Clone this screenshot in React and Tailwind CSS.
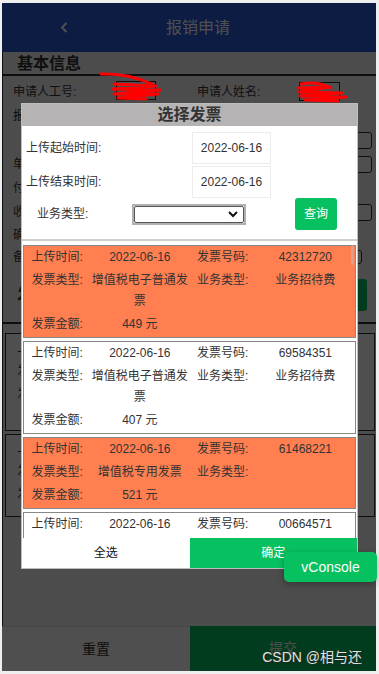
import React from "react";

const FONT = "font-['Liberation_Sans','Noto_Sans_CJK_SC',sans-serif]";

const invoices = [
  { id: 1, date: "2022-06-16", no: "42312720", type: "增值税电子普通发票", biz: "业务招待费", amount: 449, selected: true },
  { id: 2, date: "2022-06-16", no: "69584351", type: "增值税电子普通发票", biz: "业务招待费", amount: 407, selected: false },
  { id: 3, date: "2022-06-16", no: "61468221", type: "增值税专用发票", biz: "", amount: 521, selected: true },
  { id: 4, date: "2022-06-16", no: "00664571", type: "增值税电子普通发票", biz: "业务招待费", amount: 362, selected: false },
];

const InvoiceGrid = ({ inv }) => (
  <div className="grid grid-cols-[2fr_3fr_2fr_3fr] text-center text-[12px] leading-[21px] text-[#333]">
    <div className="py-px">上传时间:</div>
    <div className="py-px">{inv.date}</div>
    <div className="py-px">发票号码:</div>
    <div className="py-px">{inv.no}</div>
    <div className="py-px">发票类型:</div>
    <div className="py-px">{inv.type}</div>
    <div className="py-px">业务类型:</div>
    <div className="py-px">{inv.biz}</div>
    <div className="py-px">发票金额:</div>
    <div className="py-px">{inv.amount} 元</div>
  </div>
);

const InvoiceCard = ({ inv }) => (
  <div className={`shrink-0 border border-[#888] pb-px ${inv.selected ? "bg-[#ff7f50]" : "bg-white"}`}>
    <InvoiceGrid inv={inv} />
  </div>
);

// rows of the form that sits under the dialog
const formRows = [
  { h: "h-[24px]", label: "报销部门:" },
  { h: "h-[24px]", input: "h-[17px] w-[120px] mr-[4px]" },
  { h: "h-[24px]", label: "单据号:", input: "h-[17px] w-[120px] mr-[4px]" },
  { h: "h-[24px]", label: "付款方式:" },
  { h: "h-[24px]", label: "收款账户:", input: "h-[17px] w-[160px] mr-[4px]" },
  { h: "h-[22px]", label: "确认人:" },
  { h: "h-[22px]", label: "备注:", input: "h-[14px] w-[120px] mr-[14px]" },
];

const DateBox = ({ value }) => (
  <div className="w-[79px] h-[32px] border border-[#ececec] flex items-center justify-center text-[12px] text-[#333]">
    {value}
  </div>
);

export default function App() {
  return (
    <div className={`relative w-[379px] h-[674px] bg-[#efefef] pt-[3px] pl-[2px] pr-[3px] pb-[3px] overflow-hidden ${FONT}`}>
      <div className="relative h-full flex flex-col bg-white overflow-hidden">
        {/* Header */}
        <div className="h-[49px] shrink-0 bg-[#275ad8] flex items-center text-white">
          <div className="w-[120px] pl-[58px]">
            <svg width="8" height="11" viewBox="0 0 8 11" fill="none" stroke="currentColor" strokeWidth="2">
              <path d="M6.5 1 L2 5.5 L6.5 10" />
            </svg>
          </div>
          <div className="flex-1 text-center text-[16px] leading-[20px]">报销申请</div>
          <div className="w-[102px]" />
        </div>

        {/* Form body */}
        <div className="flex-1 bg-[#f5f5f5] border-l border-[#333] flex flex-col text-[#333]">
          <div className="h-[24px] pl-[14px] text-[16px] font-bold leading-[24px] border-b-2 border-[#333]">基本信息</div>
          <div className="h-[28px] flex items-center pl-[10px] text-[12px] leading-[16px]">
            <div className="w-[103px] pt-[3px]">申请人工号:</div>
            <div className="w-[40px] h-[19px] border border-[#333] bg-white" />
            <div className="ml-[41px] w-[102px] pt-[3px]">申请人姓名:</div>
            <div className="w-[41px] h-[19px] mt-[3px] border border-[#333] bg-white" />
          </div>
          {formRows.map((r, i) => (
            <div key={i} className={`${r.h} flex items-center justify-between pl-[10px] text-[12px]`}>
              <div>{r.label || ""}</div>
              {r.input && <div className={`${r.input} border border-[#333] rounded-[3px] bg-white`} />}
            </div>
          ))}
          <div className="h-[56px] flex items-center justify-between pl-[14px] pr-[9px] border-b-2 border-[#333]">
            <div className="text-[16px] font-bold">发票信息</div>
            <div className="w-[60px] h-[32px] bg-[#07c160] rounded-[3px] text-white text-[12px] flex items-center justify-center">添加</div>
          </div>
          <div className="mt-[9px] ml-[2px] mr-px border border-[#333] bg-white pt-[3px] pb-[24px]">
            <InvoiceGrid inv={invoices[0]} />
          </div>
          <div className="mt-[3px] ml-[2px] mr-px border border-[#333] bg-white pt-[2px] pb-[10px]">
            <InvoiceGrid inv={invoices[2]} />
          </div>
        </div>

        {/* Bottom bar */}
        <div className="h-[45px] shrink-0 flex text-[14px]">
          <div className="w-[188px] bg-white border-t border-[#e5e5e5] flex items-center justify-center text-[#333]">重置</div>
          <div className="flex-1 bg-[#07c160] flex items-center justify-center text-white">提交</div>
        </div>

        {/* Mask */}
        <div className="absolute inset-0 bg-black/[0.69]" />

        {/* Dialog */}
        <div className="absolute left-[19px] top-[100px] w-[337px] bg-white border border-[#bdbdbd] flex flex-col">
          <div className="h-[22px] bg-[#b5b3b3] text-center text-[16px] font-bold leading-[22px] text-[#333]">选择发票</div>
          <div className="mt-[6px] flex items-center text-[12px] text-[#333]">
            <div className="w-[170px] pl-[4px]">上传起始时间:</div>
            <DateBox value="2022-06-16" />
          </div>
          <div className="mt-[2px] flex items-center text-[12px] text-[#333]">
            <div className="w-[170px] pl-[4px]">上传结束时间:</div>
            <DateBox value="2022-06-16" />
          </div>
          <div className="h-[32px] flex items-center text-[12px] text-[#333]">
            <div className="w-[110px] pl-[15px]">业务类型:</div>
            <div className="w-[114px] h-[21px] border-2 border-[#b0b0b0] bg-white">
              <div className="h-full border border-[#555] rounded-[2px] flex items-center justify-end pr-[5px]">
                <svg width="10" height="7" viewBox="0 0 10 7" fill="none" stroke="#111" strokeWidth="2">
                  <path d="M1 1 L5 5 L9 1" />
                </svg>
              </div>
            </div>
            <div className="ml-[49px] w-[42px] h-[32px] bg-[#07c160] rounded-[3px] text-white flex items-center justify-center">查询</div>
          </div>
          <div className="mt-[9px] border-t-2 border-[#cfcfcf]" />
          <div className="relative h-[297px] overflow-hidden px-px pt-[4px] flex flex-col gap-[3px]">
            {invoices.map((inv) => (
              <InvoiceCard key={inv.id} inv={inv} />
            ))}
            <div className="absolute right-[3px] top-[4px] w-[3px] h-[20px] rounded-full bg-[#d9a089]" />
          </div>
          <div className="h-[30px] flex text-[12px]">
            <div className="flex-1 flex items-center justify-center text-[#111] bg-white">全选</div>
            <div className="flex-1 flex items-center justify-center text-white bg-[#07c160]">确定</div>
          </div>
        </div>
      </div>

      {/* red marks over the ids */}
      <svg className="absolute left-0 top-0 pointer-events-none" width="379" height="110" viewBox="0 0 379 110" fill="none" stroke="#ff0000" strokeWidth="3" strokeLinecap="round" strokeLinejoin="round">
        <path d="M101 74 Q128 73 152 84" />
        <path d="M114 84 L156 86 L113 89 L160 90 L114 94 L158 94 L118 98 L146 99" />
        <path d="M301 84 Q318 81 330 88" />
        <path d="M298 88 L330 87 L299 92 L342 93 L300 96 L346 97 L305 100 L338 101" />
      </svg>

      {/* vConsole */}
      <div className="absolute left-[284px] top-[552px] w-[93px] h-[30px] rounded-[5px] bg-[#07c160] shadow-[0_2px_6px_rgba(0,0,0,0.3)] text-white text-[14px] flex items-center justify-center">
        vConsole
      </div>

      <div className="absolute right-[17px] top-[647px] text-[14px] leading-[20px] text-[#e2e2e2] [text-shadow:1px_1px_2px_#222]">
        CSDN @相与还
      </div>
    </div>
  );
}
